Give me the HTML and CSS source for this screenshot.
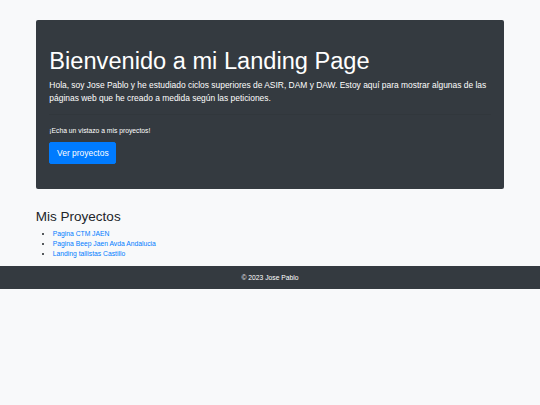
FILE: index.html
```html
<!DOCTYPE html>
<html lang="es">
<head>
    <meta charset="UTF-8">
    <meta name="viewport" content="width=device-width, initial-scale=1.0">
    <title>Landing Page</title>
    <link rel="stylesheet" href="styles.css">
</head>
<body>
    <div class="container top-space">
        <div class="jumbotron">
            <h1 class="display-4">Bienvenido a mi Landing Page</h1>
            <p class="lead">Hola, soy Jose Pablo y he estudiado ciclos superiores de ASIR, DAM y DAW. Estoy aquí para mostrar algunas de las páginas web que he creado a medida según las peticiones.</p>
            <hr class="divider">
            <p>¡Echa un vistazo a mis proyectos!</p>
            <a class="btn-primary" href="#proyectos" role="button">Ver proyectos</a>
        </div>

        <section id="proyectos" class="projects">
            <h2>Mis Proyectos</h2>
            <ul>
                <li><a href="#">Pagina CTM JAEN</a></li>
                <li><a href="#">Pagina Beep Jaen Avda Andalucia</a></li>
                <li><a href="#">Landing tallistas Castillo</a></li>
            </ul>
        </section>
    </div>

    <footer class="footer">
        <p>&copy; 2023 Jose Pablo</p>
    </footer>
</body>
</html>
```

FILE: styles.css
```css
:root {
    --dark: #343a40;
    --primary: #007bff;
    --text: #212529;
}

html {
    font-size: 6.75px;
}

* {
    margin: 0;
    padding: 0;
    box-sizing: border-box;
}

body {
    font-family: "Liberation Sans", Arial, sans-serif;
    font-size: 1rem;
    line-height: 1.5;
    color: var(--text);
    background: #f8f9fa;
}

.container {
    max-width: 71.25rem;
    margin: 0 auto;
    padding: 0 0.9375rem;
}

.top-space {
    margin-top: 3rem;
}

.jumbotron {
    background: var(--dark);
    color: white;
    padding: 4rem 2rem calc(4rem - 2px);
    margin-bottom: 2rem;
    border-radius: 0.3rem;
}

.display-4 {
    font-size: 3.5rem;
    font-weight: 300;
    line-height: 1.2;
    margin-bottom: 0.5rem;
}

.jumbotron p {
    margin-bottom: 1rem;
}

.lead {
    font-size: 1.25rem;
    font-weight: 300;
}

.divider {
    border: 0;
    border-top: 1px solid rgba(0, 0, 0, 0.05);
    margin: 1.5rem 0;
}

.btn-primary {
    display: inline-block;
    background: var(--primary);
    color: white;
    text-decoration: none;
    font-size: 1.25rem;
    line-height: 1.5;
    padding: 0.5rem 1rem;
    border: 1px solid var(--primary);
    border-radius: 0.3rem;
}

.projects {
    padding-top: 1rem;
}

.projects h2 {
    font-size: 2rem;
    font-weight: 500;
    line-height: 1.2;
    margin-bottom: 0.5rem;
}

.projects ul {
    padding-left: 2.5rem;
    margin-bottom: 1rem;
}

.projects a {
    color: var(--primary);
    text-decoration: none;
}

.footer {
    background: var(--dark);
    color: white;
    text-align: center;
    padding: 1rem 0;
}
```
